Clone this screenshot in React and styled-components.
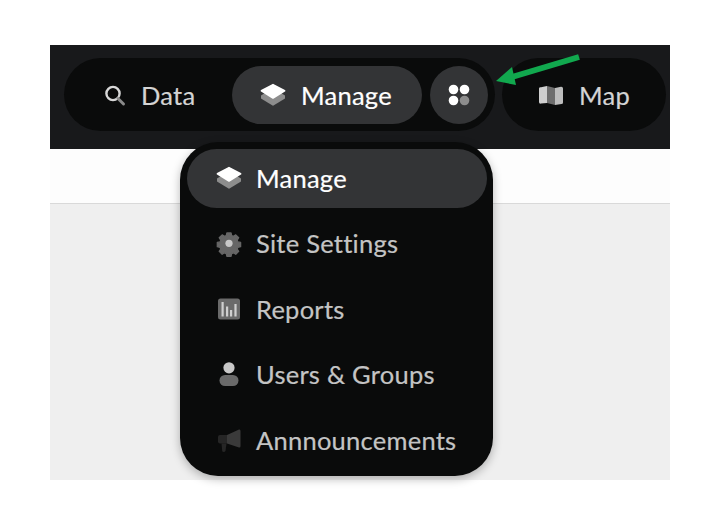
import React from "react";
import styled, { createGlobalStyle } from "styled-components";

const Global = createGlobalStyle`
  html, body { margin: 0; padding: 0; background: #fff; }
  body { font-family: "Lato", "Noto Sans", sans-serif; }
  #root { width: 720px; height: 520px; }
`;

const Page = styled.div`
  width: 720px;
  height: 520px;
  padding: 45px 50px 40px;
  box-sizing: border-box;
`;

const Frame = styled.div`
  position: relative;
  width: 620px;
  height: 435px;
  background: #efefef;
  display: flex;
  flex-direction: column;
`;

const Header = styled.header`
  height: 104px;
  flex: none;
  background: #18191b;
  display: flex;
  align-items: flex-start;
  padding: 13px 4px 0 14px;
  box-sizing: border-box;
  gap: 7px;
`;

const NavGroup = styled.nav`
  height: 73px;
  border-radius: 37px;
  background: #0a0b0b;
  display: flex;
  align-items: center;
  padding: ${p => p.$pad};
  box-sizing: border-box;
  width: ${p => p.$w}px;
`;

const NavItem = styled.div`
  display: flex;
  align-items: center;
  height: 58px;
  border-radius: 29px;
  box-sizing: border-box;
  font-size: 25.5px;
  letter-spacing: 0.25px;
  -webkit-text-stroke: 0.2px currentColor;
  color: ${p => (p.$active ? "#fff" : "#d4d4d4")};
  background: ${p => (p.$active ? "#333436" : "transparent")};
  width: ${p => p.$w}px;
  padding-left: ${p => p.$pl}px;
  gap: ${p => p.$gap}px;
  flex: none;
  margin-right: ${p => p.$mr || 0}px;
`;

const RoundButton = styled.div`
  width: 58px;
  height: 58px;
  border-radius: 50%;
  background: #333436;
  display: flex;
  align-items: center;
  justify-content: center;
  flex: none;
`;

const SubBar = styled.div`
  height: 55px;
  flex: none;
  background: #fdfdfd;
  border-bottom: 1px solid #d9d9d9;
  box-sizing: border-box;
`;

const Menu = styled.div`
  position: absolute;
  left: 130px;
  top: 97px;
  width: 313px;
  height: 334px;
  background: #0a0b0b;
  border-radius: 38px;
  padding: 7px 6px 6px 7px;
  box-sizing: border-box;
  box-shadow: 0 3px 10px rgba(0, 0, 0, 0.28);
  display: flex;
  flex-direction: column;
`;

const MenuItem = styled.div`
  height: 59px;
  flex: none;
  margin-bottom: 6.5px;
  border-radius: 30px;
  display: flex;
  align-items: center;
  padding: 0 0 2px 28px;
  box-sizing: border-box;
  gap: 13px;
  font-size: 25.5px;
  letter-spacing: 0.25px;
  -webkit-text-stroke: 0.2px currentColor;
  color: ${p => (p.$active ? "#fff" : "#c4c4c4")};
  background: ${p => (p.$active ? "#333436" : "transparent")};
`;

const IconBox = styled.svg`
  width: 28px;
  height: 28px;
  flex: none;
  display: block;
`;

const Arrow = styled.svg`
  position: absolute;
  left: 442px;
  top: 5px;
  width: 92px;
  height: 44px;
`;

const Layers = () => (
  <IconBox viewBox="0 0 28 28">
    <path d="M2 14.5 L6 12 L22 12 L26 14.5 L26 17.5 L14.5 24.5 Q14 24.8 13.5 24.5 L2 17.5 Z" fill="#8d8d8d" strokeLinejoin="round" />
    <path d="M14 3.6 L25.6 9.8 L14 17 L2.4 9.8 Z" fill="#fff" stroke="#fff" strokeWidth="1.6" strokeLinejoin="round" />
  </IconBox>
);

const Search = () => (
  <IconBox viewBox="0 0 28 28">
    <circle cx="12" cy="12.5" r="6.6" fill="none" stroke="#d8d8d8" strokeWidth="2.4" />
    <path d="M17 17.5 L22.5 23" stroke="#8a8a8a" strokeWidth="3" strokeLinecap="round" />
  </IconBox>
);

const MapIcon = () => (
  <IconBox viewBox="0 0 28 28">
    <path d="M2 7.5 Q2 6 4 6.2 L10 5 L10 22 L4 22.6 Q2 23 2 21 Z" fill="#cfcfcf" />
    <path d="M10 5 L18 7 L18 24 L10 22 Z" fill="#6d6d6d" />
    <path d="M18 7 L24 5.8 Q26 5.6 26 7.5 L26 21.5 Q26 23 24.5 23 L18 24 Z" fill="#bdbdbd" />
  </IconBox>
);

const Dots = () => (
  <svg width="22" height="22" viewBox="0 0 22 22">
    <circle cx="5.5" cy="5.5" r="4.8" fill="#fff" />
    <circle cx="16.5" cy="5.5" r="4.8" fill="#fff" />
    <circle cx="5.5" cy="16.5" r="4.8" fill="#fff" />
    <circle cx="16.5" cy="16.5" r="4.8" fill="#8d8d8d" />
  </svg>
);

const Gear = () => (
  <IconBox viewBox="0 0 28 28">
    <path
      fill="#666"
      d="M11.5 2.5h5l.7 3.2 2.1.9 2.8-1.8 3.5 3.5-1.8 2.8.9 2.1 3.2.7v5l-3.2.7-.9 2.1 1.8 2.8-3.5 3.5-2.8-1.8-2.1.9-.7 3.2h-5l-.7-3.2-2.1-.9-2.8 1.8-3.5-3.5 1.8-2.8-.9-2.1-3.2-.7v-5l3.2-.7.9-2.1-1.8-2.8 3.5-3.5 2.8 1.8 2.1-.9z"
      transform="translate(2.2 1.8) scale(0.84)"
      stroke="#666"
      strokeWidth="1.5"
      strokeLinejoin="round"
    />
    <circle cx="14" cy="14.3" r="3.6" fill="#c8c8c8" />
  </IconBox>
);

const Chart = () => (
  <IconBox viewBox="0 0 28 28">
    <rect x="3" y="3.5" width="22" height="21" rx="2.5" fill="#6a6a6a" />
    <rect x="6.5" y="7" width="2.2" height="14.5" fill="#cfcfcf" />
    <rect x="11" y="11.5" width="2.2" height="10" fill="#cfcfcf" />
    <rect x="15" y="15" width="2.2" height="6.5" fill="#cfcfcf" />
    <rect x="19.4" y="9" width="2.2" height="12.5" fill="#cfcfcf" />
  </IconBox>
);

const User = () => (
  <IconBox viewBox="0 0 28 28">
    <circle cx="14" cy="7.8" r="5.6" fill="#c8c8c8" />
    <rect x="4.5" y="15" width="19" height="11" rx="5.5" fill="#6a6a6a" />
  </IconBox>
);

const Megaphone = () => (
  <IconBox viewBox="0 0 28 28">
    <path d="M12 9 L24 3.5 Q25.5 3 25.5 5 L25.5 20 Q25.5 22 24 21.5 L12 17.5 Z" fill="#3a3a3a" />
    <path d="M3 11 Q3 9 5 9 L12 9 L12 17.5 L5 17.5 Q3 17.5 3 15.5 Z" fill="#262626" />
    <path d="M6.5 17.5 L11.5 17.5 L10.5 25 Q10 26 8.5 26 Q7.5 26 7.2 25 Z" fill="#262626" />
  </IconBox>
);

const menu = [
  { label: "Manage", icon: <Layers />, active: true },
  { label: "Site Settings", icon: <Gear /> },
  { label: "Reports", icon: <Chart /> },
  { label: "Users & Groups", icon: <User /> },
  { label: "Annnouncements", icon: <Megaphone /> },
];

export default function App() {
  return (
    <Page>
      <Global />
      <Frame>
        <Header>
          <NavGroup $w={431} $pad="0 7px 0 0">
            <NavItem $w={168} $pl={37} $gap={12}>
              <Search />
              Data
            </NavItem>
            <NavItem $active $w={190} $pl={27} $gap={14} $mr={8}>
              <Layers />
              Manage
            </NavItem>
            <RoundButton>
              <Dots />
            </RoundButton>
          </NavGroup>
          <NavGroup $w={164} $pad="0">
            <NavItem $w={164} $pl={35} $gap={14}>
              <MapIcon />
              Map
            </NavItem>
          </NavGroup>
        </Header>
        <SubBar />
        <Menu>
          {menu.map(m => (
            <MenuItem key={m.label} $active={m.active}>
              {m.icon}
              {m.label}
            </MenuItem>
          ))}
        </Menu>
        <Arrow viewBox="0 0 92 44">
          <path d="M87 7 L20 27" stroke="#11a84e" strokeWidth="6" fill="none" />
          <path d="M4 31 L20 17 L24 35 Z" fill="#11a84e" />
        </Arrow>
      </Frame>
    </Page>
  );
}
